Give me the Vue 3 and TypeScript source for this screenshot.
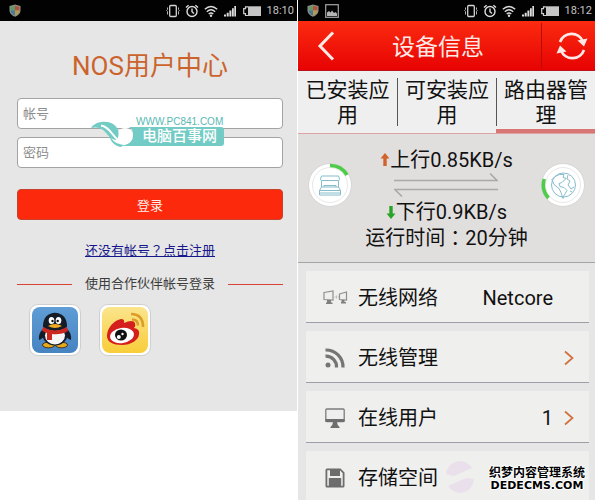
<script setup lang="ts">
import { ref } from 'vue'

interface DeviceRow {
  icon: string
  label: string
  value?: string
  link: boolean
}

const account = ref('')
const password = ref('')
const activeTab = ref(2)

const tabs: string[] = ['已安装应用', '可安装应用', '路由器管理']

const phoneTimes = { login: '18:10', device: '18:12' }
const statusIcons: string[] = ['vibrate', 'alarm', 'wifi', 'signal', 'battery']

const rows: DeviceRow[] = [
  { icon: 'network', label: '无线网络', value: 'Netcore', link: false },
  { icon: 'feed', label: '无线管理', link: true },
  { icon: 'monitor', label: '在线用户', value: '1', link: true },
  { icon: 'disk', label: '存储空间', link: false },
]
</script>

<template>
  <svg class="sprite" aria-hidden="true">
    <symbol id="shield" viewBox="0 0 12 13">
      <path d="M6 .5 11.500 2v4.500C11.500 9.500 9 11.700 6 12.700 3 11.700.5 9.500.5 6.500V2Z" fill="#8c9187" />
      <path d="M6 1.700V6.500H1.600V2.800Z" fill="#5f9a68" />
      <path d="M6 1.700V6.500h4.400V2.800Z" fill="#b5523f" />
      <path d="M1.600 6.500H6v5C3.500 10.600 1.700 9 1.600 6.500Z" fill="#4b7896" />
      <path d="M10.400 6.500H6v5c2.500-.9 4.300-2.500 4.400-5Z" fill="#b39a48" />
    </symbol>
    <symbol id="picture" viewBox="0 0 14 14">
      <rect x=".7" y=".7" width="12.600" height="12.600" fill="none" stroke="#a5a5a5" stroke-width="1.200" />
      <path d="M2 12V8.500l2-1.500 1.500 1.500L7 6.500 9 9l1.500-1L12 9.500V12Z" fill="#b5b5b5" />
    </symbol>
    <symbol id="vibrate" viewBox="0 0 14 14">
      <rect x="3.700" y="1.500" width="6.600" height="11" rx="1" fill="none" stroke="#d4d4d4" stroke-width="1.300" />
      <path d="M1.500 3.500v2l-.8 1 .8 1v3M12.500 3.500v2l.8 1-.8 1v3" fill="none" stroke="#b4b4b4" />
    </symbol>
    <symbol id="alarm" viewBox="0 0 14 14">
      <circle cx="7" cy="7.500" r="5" fill="none" stroke="#dcdcdc" stroke-width="1.400" />
      <path d="M7 4.500v3.200l2 1.800M1 3.600 3.600 1.200M13 3.600 10.400 1.200" fill="none" stroke="#dcdcdc" stroke-width="1.400" />
    </symbol>
    <symbol id="wifi" viewBox="0 0 14 14">
      <path d="M.8 5.300Q7-.3 13.200 5.300M2.800 7.700Q7 4 11.200 7.700M4.700 10Q7 8.100 9.300 10" fill="none" stroke="#dcdcdc" stroke-width="1.400" />
      <circle cx="7" cy="11.800" r="1.200" fill="#dcdcdc" />
    </symbol>
    <symbol id="signal" viewBox="0 0 14 14">
      <path d="M1 10.500h2V12.500H1ZM3.700 8.700h2v3.800h-2ZM6.400 6.500h2v6h-2ZM9 4.300h1.800v8.200H9ZM11.300 2h1.700v10.500h-1.700Z" fill="#dcdcdc" />
    </symbol>
    <symbol id="battery" viewBox="0 0 20 14">
      <path d="M6 2.900H3.500v1.800H1.700v5h1.800v1.800H6" fill="none" stroke="#cfcfcf" stroke-width="1.200" />
      <rect x="6" y="2.300" width="13" height="9.700" fill="#c6c6c6" />
    </symbol>
    <symbol id="network" viewBox="0 0 26 18">
      <path d="M2 3.500 11 2v9L2 10.500ZM17.500 5l7-2v8l-7-.5Z" fill="none" stroke="#8f8f8f" stroke-width="1.200" />
      <path d="M5 11h4v2.500h1.500V15H4v-1.500h1ZM19.500 11h3v2H24v1.500h-5V13h.5Z" fill="#808080" />
      <path d="M12.500 8h1.200M14.700 6.500v3M16 8h.8" stroke="#b5b5b5" fill="none" />
    </symbol>
    <symbol id="feed" viewBox="0 0 20 20">
      <circle cx="3" cy="17" r="2.500" fill="#757575" />
      <path d="M.5 8.200A10.500 10.500 0 0 1 11.500 19.500M.5 2A17 17 0 0 1 18 19.500" fill="none" stroke="#757575" stroke-width="3.200" />
    </symbol>
    <symbol id="monitor" viewBox="0 0 20 20">
      <rect x=".8" y="1" width="18.400" height="12.500" rx="1" fill="#eee" stroke="#7c7c7c" stroke-width="1.300" />
      <path d="M.5 11h19v3H.5ZM8 14h4l.7 3 1.800 2v1h-9v-1l1.800-2Z" fill="#6e6e6e" />
    </symbol>
    <symbol id="disk" viewBox="0 0 20 20">
      <path fill-rule="evenodd" d="M2 .5h13.500l4 4V18q0 1.500-1.500 1.500H2Q.5 19.500.5 18V2Q.5.5 2 .5ZM2.300 2.300v15.400h1.500V10h12.400v7.700h1.500V5.200L15 2.300V8H5V2.300Z" fill="#6d6d6d" />
      <path d="M10.500 2.300H13V6h-2.500ZM5.500 11.800h9V13h-9ZM5.500 15h9v1.300h-9ZM4 17.500h12v1H4Z" fill="#6d6d6d" />
    </symbol>
  </svg>

  <main class="page">
    <section class="phone login">
      <header class="status">
        <svg class="shield"><use href="#shield" /></svg>
        <div class="status-icons">
          <svg v-for="name in statusIcons" :key="name" :class="{ wide: name === 'battery' }">
            <use :href="'#' + name" />
          </svg>
          <time>{{ phoneTimes.login }}</time>
        </div>
      </header>

      <div class="login-body">
        <h1>NOS用户中心</h1>
        <form class="form" @submit.prevent>
          <input v-model="account" type="text" placeholder="帐号" aria-label="帐号" />
          <input v-model="password" type="password" placeholder="密码" aria-label="密码" />
          <button class="submit" type="submit">登录</button>
          <div class="watermark" aria-hidden="true">
            <svg class="leaf" viewBox="0 0 46 28">
              <path d="M28 26h18V7H38Q42 9 42 14C42 21 37 26 28 26Z" fill="#72cbc4" />
              <circle cx="34" cy="16" r="8" fill="#fff" />
              <path d="M18 14C21 21 25 24 33 25L30 27C23 26 19 21 18 14Z" fill="#72cbc4" />
              <path d="M0 8C4 1 16 0 22 4 28 8 29 14 26 20 19 20 17 14 12 10 8 7 4 7 0 8Z" fill="#72cbc4" />
              <path d="M10 5.500C18 6.500 20 14 27 20" fill="none" stroke="#fff" stroke-width="1.800" />
            </svg>
            <div class="mark-text">
              <span class="mark-url">WWW.PC841.COM</span>
              <span class="mark-name">电脑百事网</span>
            </div>
          </div>
        </form>
        <a class="register" href="#register">还没有帐号<span class="punct">？</span>点击注册</a>
        <p class="partner">使用合作伙伴帐号登录</p>
        <div class="social">
          <button type="button" class="qq" aria-label="QQ">
            <svg viewBox="0 0 46 46">
              <ellipse cx="16.500" cy="38" rx="6" ry="2.800" fill="#e9a91d" stroke="#47351a" />
              <ellipse cx="29.500" cy="38" rx="6" ry="2.800" fill="#e9a91d" stroke="#47351a" />
              <path d="M12 21Q6 26 7 33q4-1 6-6ZM34 21q6 5 5 12-4-1-6-6Z" fill="#151c28" />
              <ellipse cx="23" cy="27.500" rx="12.500" ry="11" fill="#151c28" />
              <ellipse cx="23" cy="28.500" rx="10" ry="9" fill="#f6f6f6" />
              <path d="M11 20C10 1 36 1 35 20q-12 8-24 0Z" fill="#151c28" />
              <ellipse cx="19.500" cy="13.500" rx="2.800" ry="3.500" fill="#fff" />
              <ellipse cx="26.500" cy="13.500" rx="2.800" ry="3.500" fill="#fff" />
              <circle cx="20.500" cy="14" r="1.200" fill="#111" />
              <circle cx="25.700" cy="14" r="1.200" fill="#111" />
              <path d="M16 19q7-4 14 0-7 4-14 0Z" fill="#efaa20" />
              <path d="M11 20q12 7 24 0l1 4q-7 4-16 3v6h-5v-7l-5-2Z" fill="#cd281f" />
            </svg>
          </button>
          <button type="button" class="weibo" aria-label="微博">
            <svg viewBox="0 0 46 46">
              <path d="M5 29C5 20 13 13 19 12q4 0 3 4 9-4 11 0 1 3-1 5 6 1 5 6C37 33 29 38 20 38S5 35 5 29Z" fill="#d41f1d" />
              <ellipse cx="20" cy="28.500" rx="12" ry="7.500" fill="#fff" transform="rotate(-8 20 28.500)" />
              <ellipse cx="19" cy="28" rx="6" ry="5.500" fill="#111" />
              <circle cx="16.800" cy="30" r="2" fill="#fff" />
              <circle cx="20.500" cy="27" r="1.200" fill="#fff" />
              <path d="M30 12.500q6 0 6 6M29 7q12 0 12 13" fill="none" stroke="#dc9d28" stroke-width="2.600" />
            </svg>
          </button>
        </div>
      </div>
    </section>

    <section class="phone device">
      <header class="status">
        <svg class="shield"><use href="#shield" /></svg>
        <svg class="picture"><use href="#picture" /></svg>
        <div class="status-icons">
          <svg v-for="name in statusIcons" :key="name" :class="{ wide: name === 'battery' }">
            <use :href="'#' + name" />
          </svg>
          <time>{{ phoneTimes.device }}</time>
        </div>
      </header>

      <div class="titlebar">
        <button type="button" class="back" aria-label="返回">
          <svg viewBox="0 0 18 30"><path d="M16 1.500 3 15l13 13.500" fill="none" stroke="#ffe9e6" stroke-width="3" /></svg>
        </button>
        <h2>设备信息</h2>
        <button type="button" class="refresh" aria-label="刷新">
          <svg viewBox="0 0 32 30">
            <path d="M4 11A12.300 12.300 0 0 1 27 10.500M28 19A12.300 12.300 0 0 1 5 19.500" fill="none" stroke="#ffe9e6" stroke-width="2.700" />
            <path d="M21.500 9.500 31.500 7.500 28 15.500ZM10.500 20.500.5 22.500 4 14.500Z" fill="#ffe9e6" />
          </svg>
        </button>
      </div>

      <nav class="tabs">
        <button
          v-for="(tab, i) in tabs"
          :key="tab"
          type="button"
          :class="{ active: i === activeTab }"
          @click="activeTab = i"
        >
          <span>{{ tab }}</span>
        </button>
      </nav>

      <div class="traffic">
        <svg class="dial" viewBox="0 0 44 44">
          <circle cx="22" cy="22" r="21.500" fill="#fff" stroke="#d5d5d5" />
          <circle cx="22" cy="22" r="17.500" fill="none" stroke="#e8e8e8" />
          <path d="M22 2.500A19.500 19.500 0 0 1 39 12" fill="none" stroke="#4ecb48" stroke-width="3.500" />
          <path d="M13.500 13h17l1 3-1 2v6l2 3.500V32h-21v-4.500l2-3.500v-6l-1-2ZM13.500 24h17M11.500 27.500h21M12 30h20M14 17.500h16M16 24v-1.500h12V24" fill="none" stroke="#86bdcb" />
        </svg>
        <div class="rates">
          <p>
            <svg class="arrow" viewBox="0 0 10 16"><path d="M5 1 9.500 6.500H6.700V14H3.300V6.500H.5Z" fill="#d2622b" /></svg>上行0.85KB/s
          </p>
          <svg class="exchange" viewBox="0 0 104 26">
            <path d="M0 7.500h103L96 .5M104 16.500H1l7 7" fill="none" stroke="#aaa9a8" stroke-width="1.600" />
          </svg>
          <p>
            <svg class="arrow" viewBox="0 0 10 16"><path d="M5 15 .5 9.500h2.800V2h3.400v7.500h2.800Z" fill="#28a428" /></svg>下行0.9KB/s
          </p>
          <p>运行时间<span class="punct">：</span>20分钟</p>
        </div>
        <svg class="dial" viewBox="0 0 44 44">
          <circle cx="22" cy="22" r="21.500" fill="#fff" stroke="#d5d5d5" />
          <circle cx="22" cy="22" r="17.500" fill="none" stroke="#e8e8e8" />
          <path d="M3.300 16A19.500 19.500 0 0 0 7.500 35" fill="none" stroke="#4ecb48" stroke-width="3.500" />
          <circle cx="22.500" cy="22" r="12" fill="none" stroke="#86bdcb" />
          <path d="M14 13.500q4-3 9-2l-1 3 3 1-4 4-3 1 1 3 4 1 3 3-3 5-1 3-2-6-2-4-5-4-2-5ZM27 12l-1 4 3 2-2 4 3 4 3-2M29 28l2 1" fill="none" stroke="#86bdcb" />
        </svg>
      </div>

      <ul class="rows">
        <li v-for="row in rows" :key="row.label">
          <svg class="row-icon" :class="row.icon"><use :href="'#' + row.icon" /></svg>
          <span class="row-label">{{ row.label }}</span>
          <span class="row-value">{{ row.value }}</span>
          <svg class="chevron" viewBox="0 0 12 18">
            <path v-if="row.link" d="m2 2.500 7.500 6.500L2 15.500" fill="none" stroke="#d0713c" stroke-width="1.700" />
          </svg>
        </li>
      </ul>

      <svg class="ghost" viewBox="0 0 32 32" aria-hidden="true">
        <path d="M2 13A14 14 0 0 1 28 7L10 15ZM30 18A14 14 0 0 1 4 25L22 17Z" fill="#e9e0eb" />
      </svg>
      <div class="stamp" aria-hidden="true">
        <span>织梦内容管理系统</span>
        <span class="stamp-url">DEDECMS.COM</span>
      </div>
    </section>
  </main>
</template>

<style>
body {
  background: #fff;
}
</style>

<style scoped>
.sprite {
  position: absolute;
  width: 0;
  height: 0;
}

.page {
  display: grid;
  grid-template-columns: 1fr 1fr;
  gap: 1px;
  align-items: start;
  height: 100vh;
  overflow: hidden;
  font-family: Roboto, 'Noto Sans CJK SC', sans-serif;
  color: #111;
}

.page * {
  box-sizing: border-box;
}

.page button,
.page input {
  font-family: inherit;
}

h1,
h2,
p,
ul {
  margin: 0;
  padding: 0;
  font-weight: 400;
}

button {
  padding: 0;
  border: 0;
  background: none;
  color: inherit;
}

svg {
  display: block;
  flex: none;
}

.punct {
  font-family: 'Noto Sans CJK TC', sans-serif;
}

.phone {
  position: relative;
  background: #e6e6e6;
}

.status {
  display: flex;
  align-items: center;
  gap: 6px;
  height: 21px;
  padding: 0 3px 0 9px;
  background: #020202;
}

.shield {
  width: 12px;
  height: 13px;
}

.picture {
  width: 14px;
  height: 14px;
}

.status-icons {
  display: flex;
  align-items: center;
  gap: 5px;
  margin-left: auto;
  color: #c4c4c4;
  font-size: 11px;
  line-height: 20px;
}

.status-icons svg {
  width: 14px;
  height: 14px;
}

.status-icons svg.wide {
  width: 20px;
}

.login-body {
  display: flex;
  flex-direction: column;
  padding: 27px 14px 55px 17px;
}

h1 {
  margin-bottom: 14px;
  color: #cb642c;
  font-size: 26px;
  line-height: 36px;
  text-align: center;
}

.form {
  position: relative;
  display: flex;
  flex-direction: column;
  gap: 8px;
}

.form input {
  width: 100%;
  height: 31px;
  padding: 0 5px;
  border: 1px solid #a3a3a3;
  border-radius: 4px;
  outline: 0;
  background: #fff;
  color: #333;
  font-size: 13px;
}

.form input::placeholder {
  color: #8d8d8d;
  opacity: 1;
}

.submit {
  height: 31px;
  margin-top: 13px;
  border: 1px solid #c8412c;
  border-radius: 4px;
  background: #fd290d;
  color: #fff0ec;
  font-size: 13px;
}

.watermark {
  position: absolute;
  top: 19px;
  left: 74px;
  display: flex;
  pointer-events: none;
}

.leaf {
  width: 46px;
  height: 28px;
  margin-top: 3px;
}

.mark-text {
  display: flex;
  flex-direction: column;
  margin-left: -1px;
}

.mark-url {
  color: #58b9b3;
  font-family: 'Liberation Sans', sans-serif;
  font-size: 10px;
  line-height: 10px;
}

.mark-name {
  height: 19px;
  padding: 0 7px 0 6px;
  border-radius: 0 3px 3px 0;
  background: #72cbc4;
  color: #fff;
  font-size: 15px;
  font-weight: 500;
  line-height: 19px;
}

.register {
  align-self: center;
  margin-top: 20px;
  color: #17178b;
  font-size: 13px;
  line-height: 20px;
}

.partner {
  display: flex;
  align-items: center;
  gap: 13px;
  margin-top: 13px;
  color: #3c3c3c;
  font-size: 13px;
  line-height: 20px;
}

.partner::before,
.partner::after {
  content: '';
  flex: 1;
  border-top: 1px solid #d84536;
}

.social {
  display: flex;
  gap: 18px;
  margin-top: 10px;
  padding-left: 12px;
}

.social button {
  width: 52px;
  height: 52px;
  padding: 2px;
  border: 1px solid #cfcfcf;
  border-radius: 9px;
  background: #fff;
}

.social svg {
  width: 46px;
  height: 46px;
  border-radius: 8px;
}

.qq svg {
  background: linear-gradient(#5f9dd6, #4683c1);
}

.weibo svg {
  background: linear-gradient(#fbe48c, #f8cd3a);
}

.titlebar {
  display: flex;
  align-items: center;
  height: 50px;
  background: linear-gradient(#fb2b10, #e70303);
  border-bottom: 1px solid #b8141a;
  color: #ffe9e6;
}

.back {
  display: flex;
  padding-left: 19px;
}

.back svg {
  width: 18px;
  height: 30px;
}

h2 {
  flex: 1;
  padding-top: 4px;
  font-size: 23px;
  line-height: 40px;
  text-align: center;
}

.refresh {
  display: flex;
  align-items: center;
  justify-content: center;
  width: 54px;
  height: 46px;
  padding-left: 6px;
  border-left: 1px solid #b80c08;
}

.refresh svg {
  width: 32px;
  height: 30px;
}

.tabs {
  display: grid;
  grid-template-columns: repeat(3, 1fr);
  height: 63px;
  background: #efefef;
  border-bottom: 1px solid #dfa3a3;
}

.tabs button {
  padding-top: 4px;
  font-size: 21px;
  border-bottom: 4px solid transparent;
}

.tabs button.active {
  border-bottom-color: #d87676;
}

.tabs span {
  display: block;
  height: 48px;
  line-height: 25px;
}

.tabs button + button span {
  border-left: 1px solid #555;
}

.traffic {
  display: flex;
  justify-content: space-between;
  align-items: flex-start;
  padding: 13px 10px 11px;
  background: #e1dfde;
  border-bottom: 1px solid #a5a5a5;
}

.dial {
  width: 44px;
  height: 44px;
  margin-top: 16px;
}

.rates {
  display: flex;
  flex-direction: column;
  align-items: center;
  font-size: 20px;
  line-height: 26px;
}

.rates p {
  display: flex;
  align-items: center;
  white-space: nowrap;
}

.arrow {
  width: 10px;
  height: 16px;
}

.exchange {
  width: 104px;
  height: 26px;
}

.rows {
  display: flex;
  flex-direction: column;
  gap: 8px;
  padding: 8px 6px 0 8px;
  list-style: none;
}

.rows li {
  display: flex;
  align-items: center;
  height: 52px;
  padding: 3px 14px 0 13px;
  background: #efefee;
  border-bottom: 1px solid #9d9da8;
  font-size: 20px;
  line-height: 26px;
}

.row-icon {
  width: 20px;
  height: 20px;
  margin: 0 13px 0 6px;
}

.row-icon.network {
  width: 26px;
  height: 18px;
  margin: 0 10px 0 3px;
}

.row-value {
  margin-left: auto;
}

.chevron {
  width: 12px;
  height: 18px;
  margin-left: 10px;
}

.ghost {
  position: absolute;
  top: 461px;
  left: 146px;
  width: 32px;
  height: 32px;
}

.stamp {
  position: absolute;
  top: 465px;
  right: 10px;
  display: flex;
  flex-direction: column;
  align-items: center;
  color: #000;
  font-size: 12px;
  font-weight: 700;
  line-height: 16px;
  text-shadow:
    1px 0 #fff,
    -1px 0 #fff,
    0 1px #fff,
    0 -1px #fff,
    0 0 3px #fff;
}

.stamp-url {
  font-family: 'DejaVu Sans', sans-serif;
  font-size: 11px;
  line-height: 10px;
}
</style>
